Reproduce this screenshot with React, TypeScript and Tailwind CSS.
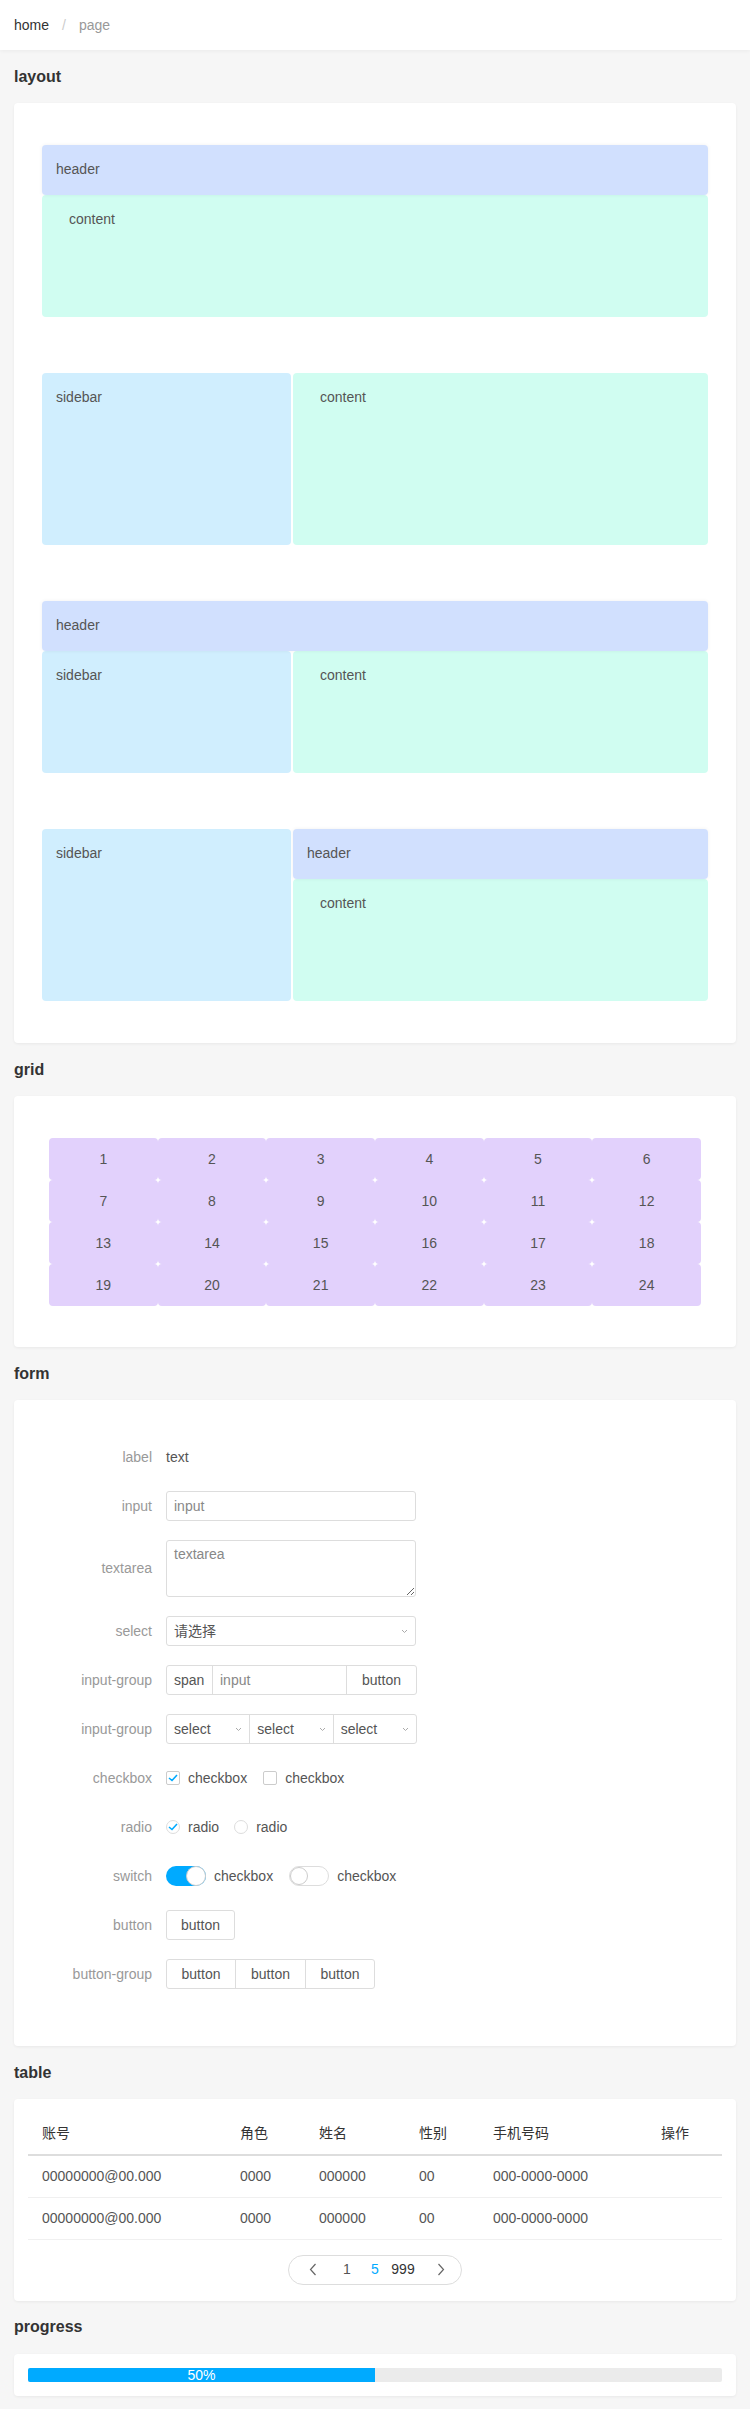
import React from 'react';

const font = { fontFamily: '"Liberation Sans", Arial, "Noto Sans CJK SC", sans-serif' };

function Title({ children }: { children: React.ReactNode }) {
    return <div className="h-[53px] flex items-center px-[14px] text-[16px] font-bold text-[#333]">{children}</div>;
}

function Card({ className, children }: { className?: string; children: React.ReactNode }) {
    return <div className={`mx-[14px] bg-white rounded-[4px] shadow-[0_1px_3px_rgba(0,0,0,0.06)] ${className ?? ''}`}>{children}</div>;
}

const Header = () => (
    <div className="h-[50px] shrink-0 bg-[#d1e0fe] rounded-[4px] px-[14px] pt-[14px] leading-[20px] shadow-[0_0_4px_rgba(0,0,0,0.06)] relative z-10">header</div>
);
// inRow: content sits beside a sidebar and takes the rest of the width
const Content = ({ h = 'h-[122px]', inRow = false }: { h?: string; inRow?: boolean }) => (
    <div className={`${h} ${inRow ? 'flex-1' : 'shrink-0'} bg-[#d0fdf1] rounded-[4px] pl-[27px] pt-[14px] leading-[20px]`}>content</div>
);
const Sidebar = ({ h }: { h: string }) => (
    <div className={`${h} w-[249px] shrink-0 bg-[#d0eefe] rounded-[4px] px-[14px] pt-[14px] leading-[20px]`}>sidebar</div>
);

function Chevron({ className }: { className?: string }) {
    return (
        <svg width="7" height="5" viewBox="0 0 7 5" className={className}>
            <polyline points="1,1 3.5,3.5 6,1" fill="none" stroke="#aaa" strokeWidth="1" />
        </svg>
    );
}

function Check() {
    return (
        <svg width="10" height="8" viewBox="0 0 10 8">
            <polyline points="1,4 4,6.5 9,1" fill="none" stroke="#00aaff" strokeWidth="1.6" />
        </svg>
    );
}

function Row({ label, children }: { label: string; children: React.ReactNode }) {
    return (
        <div className="flex items-center min-h-[30px] mb-[19px]">
            <div className="w-[138px] text-right text-[#999] shrink-0">{label}</div>
            <div className="ml-[14px] flex items-center text-[#555]">{children}</div>
        </div>
    );
}

const rows = [
    ['00000000@00.000', '0000', '000000', '00', '000-0000-0000', ''],
    ['00000000@00.000', '0000', '000000', '00', '000-0000-0000', ''],
];

export default function App() {
    return (
        <div className="min-h-screen bg-[#f6f6f6] text-[14px] text-[#555] pb-[14px]" style={font}>
            {/* breadcrumb */}
            <div className="h-[50px] bg-white flex items-center px-[14px] shadow-[0_1px_4px_rgba(0,0,0,0.05)]">
                <span className="text-[#333]">home</span>
                <span className="mx-[13px] text-[#ccc]">/</span>
                <span className="text-[#999]">page</span>
            </div>

            <Title>layout</Title>
            <Card className="px-[28px] py-[42px] flex flex-col gap-[56px]">
                <div className="flex flex-col">
                    <Header />
                    <Content />
                </div>
                <div className="flex gap-[2px]">
                    <Sidebar h="h-[172px]" />
                    <Content h="h-[172px]" inRow />
                </div>
                <div className="flex flex-col">
                    <Header />
                    <div className="flex gap-[2px]">
                        <Sidebar h="h-[122px]" />
                        <Content inRow />
                    </div>
                </div>
                <div className="flex gap-[2px]">
                    <Sidebar h="h-[172px]" />
                    <div className="flex-1 flex flex-col">
                        <Header />
                        <Content />
                    </div>
                </div>
            </Card>

            <Title>grid</Title>
            <Card className="px-[35px] pt-[42px] pb-[41px]">
                <div className="grid grid-cols-6">
                    {Array.from({ length: 24 }, (_, i) => (
                        <div key={i} className="h-[42px] bg-[#e2d1fc] rounded-[4px] flex items-center justify-center text-[#555]">
                            {i + 1}
                        </div>
                    ))}
                </div>
            </Card>

            <Title>form</Title>
            <Card className="pt-[42px] pb-[38px]">
                <Row label="label">text</Row>
                <Row label="input">
                    <input placeholder="input" className="w-[250px] h-[30px] border border-[#ddd] rounded-[3px] px-[7px] outline-none placeholder:text-[#888]" />
                </Row>
                <Row label="textarea">
                    <textarea placeholder="textarea" className="w-[250px] h-[57px] border border-[#ddd] rounded-[3px] px-[7px] py-[3px] outline-none block placeholder:text-[#888]" />
                </Row>
                <Row label="select">
                    <div className="w-[250px] h-[30px] border border-[#ddd] rounded-[3px] px-[7px] flex items-center justify-between text-[#555]">
                        <span>请选择</span>
                        <Chevron />
                    </div>
                </Row>
                <Row label="input-group">
                    <div className="w-[251px] h-[30px] border border-[#ddd] rounded-[3px] flex">
                        <div className="w-[46px] px-[7px] flex items-center border-r border-[#ddd]">span</div>
                        <div className="flex-1 px-[7px] flex items-center text-[#888] border-r border-[#ddd]">input</div>
                        <div className="w-[69px] flex items-center justify-center">button</div>
                    </div>
                </Row>
                <Row label="input-group">
                    <div className="w-[251px] h-[30px] border border-[#ddd] rounded-[3px] flex">
                        {[0, 1, 2].map((i) => (
                            <div key={i} className={`flex-1 px-[7px] flex items-center justify-between ${i < 2 ? 'border-r border-[#ddd]' : ''}`}>
                                <span>select</span>
                                <Chevron />
                            </div>
                        ))}
                    </div>
                </Row>
                <Row label="checkbox">
                    <div className="w-[14px] h-[14px] border border-[#ccc] rounded-[2px] flex items-center justify-center">
                        <Check />
                    </div>
                    <span className="ml-[8px]">checkbox</span>
                    <div className="ml-[16px] w-[14px] h-[14px] border border-[#ccc] rounded-[2px]" />
                    <span className="ml-[8px]">checkbox</span>
                </Row>
                <Row label="radio">
                    <div className="w-[14px] h-[14px] border border-[#ddd] rounded-full flex items-center justify-center">
                        <Check />
                    </div>
                    <span className="ml-[8px]">radio</span>
                    <div className="ml-[15px] w-[14px] h-[14px] border border-[#ddd] rounded-full" />
                    <span className="ml-[8px]">radio</span>
                </Row>
                <Row label="switch">
                    <div className="w-[40px] h-[20px] rounded-full bg-[#00aaff] flex justify-end">
                        <div className="w-[20px] h-[20px] rounded-full bg-white border border-[#ccc]" />
                    </div>
                    <span className="ml-[8px]">checkbox</span>
                    <div className="ml-[16px] w-[40px] h-[20px] rounded-full bg-white border border-[#ddd] flex">
                        <div className="w-[18px] h-[18px] rounded-full bg-white border border-[#ccc]" />
                    </div>
                    <span className="ml-[8px]">checkbox</span>
                </Row>
                <Row label="button">
                    <div className="w-[69px] h-[30px] border border-[#ddd] rounded-[3px] flex items-center justify-center">button</div>
                </Row>
                <Row label="button-group">
                    <div className="h-[30px] border border-[#ddd] rounded-[3px] flex">
                        <div className="w-[69px] flex items-center justify-center border-r border-[#ddd]">button</div>
                        <div className="w-[70px] flex items-center justify-center border-r border-[#ddd]">button</div>
                        <div className="w-[68px] flex items-center justify-center">button</div>
                    </div>
                </Row>
            </Card>

            <Title>table</Title>
            <Card className="px-[14px] pt-[14px] pb-[16px]">
                <table className="w-full border-collapse table-fixed">
                    <colgroup>
                        <col className="w-[198px]" />
                        <col className="w-[79px]" />
                        <col className="w-[100px]" />
                        <col className="w-[74px]" />
                        <col className="w-[168px]" />
                        <col />
                    </colgroup>
                    <thead>
                        <tr className="h-[42px] border-b-2 border-[#ddd] text-[#333]">
                            {['账号', '角色', '姓名', '性别', '手机号码', '操作'].map((h) => (
                                <th key={h} className="text-left font-normal px-[14px]">{h}</th>
                            ))}
                        </tr>
                    </thead>
                    <tbody>
                        {rows.map((r, i) => (
                            <tr key={i} className="h-[42px] border-b border-[#f0f0f0] text-[#555]">
                                {r.map((c, j) => (
                                    <td key={j} className="px-[14px]">{c}</td>
                                ))}
                            </tr>
                        ))}
                    </tbody>
                </table>
                <div className="flex justify-center mt-[15px]">
                    <div className="h-[30px] border border-[#ddd] rounded-full flex items-center pl-[10px] pr-[6px]">
                        <div className="w-[28px] flex justify-center">
                            <svg width="8" height="13" viewBox="0 0 8 13"><polyline points="6.5,1 1.5,6.5 6.5,12" fill="none" stroke="#666" strokeWidth="1.2" /></svg>
                        </div>
                        <div className="w-[28px] ml-[6px] text-center text-[#555]">1</div>
                        <div className="w-[28px] text-center text-[#00aaff]">5</div>
                        <div className="w-[28px] text-center text-[#333]">999</div>
                        <div className="w-[28px] ml-[10px] flex justify-center">
                            <svg width="8" height="13" viewBox="0 0 8 13"><polyline points="1.5,1 6.5,6.5 1.5,12" fill="none" stroke="#666" strokeWidth="1.2" /></svg>
                        </div>
                    </div>
                </div>
            </Card>

            <Title>progress</Title>
            <Card className="p-[14px]">
                <div className="h-[14px] bg-[#ebebeb] rounded-[2px] overflow-hidden">
                    <div className="h-full bg-[#00aaff] text-white text-center leading-[14px]" style={{ width: '50%' }}>50%</div>
                </div>
            </Card>
        </div>
    );
}
